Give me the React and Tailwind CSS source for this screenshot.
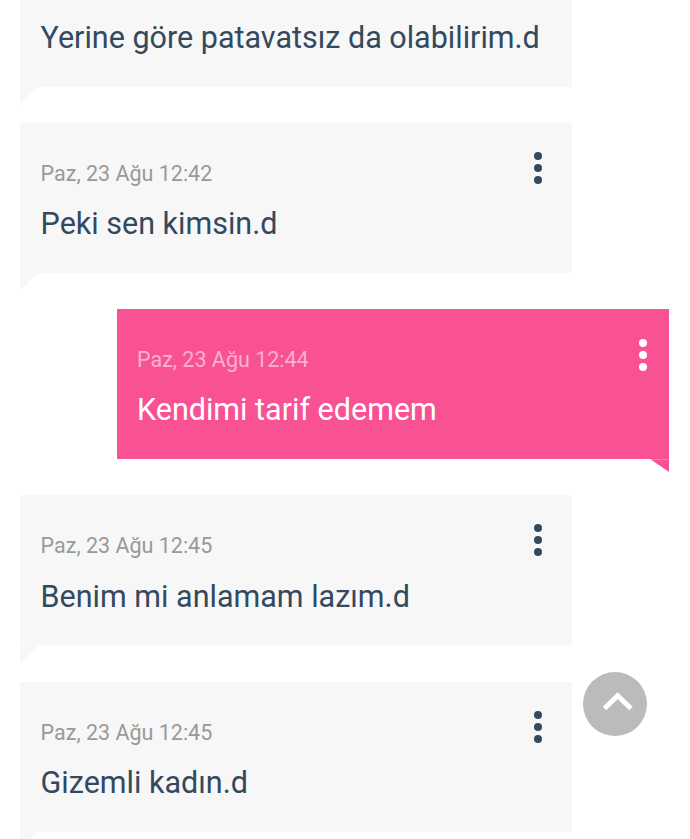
const messages = [
  { id: 1, text: 'Yerine göre patavatsız da olabilirim.d' },
  { id: 2, date: 'Paz, 23 Ağu 12:42', text: 'Peki sen kimsin.d' },
  { id: 3, date: 'Paz, 23 Ağu 12:44', text: 'Kendimi tarif edemem', mine: true },
  { id: 4, date: 'Paz, 23 Ağu 12:45', text: 'Benim mi anlamam lazım.d' },
  { id: 5, date: 'Paz, 23 Ağu 12:45', text: 'Gizemli kadın.d' },
];

function MoreDots({ mine }) {
  const dot = mine ? 'bg-white' : 'bg-[#34495e]';
  return (
    <div className={mine ? 'flex flex-col gap-[4px] pt-[30px] pr-[22px]' : 'flex flex-col gap-[4px] pt-[29px] pr-[30px]'}>
      <span className={`block w-[8px] h-[8px] rounded-full ${dot}`} />
      <span className={`block w-[8px] h-[8px] rounded-full ${dot}`} />
      <span className={`block w-[8px] h-[8px] rounded-full ${dot}`} />
    </div>
  );
}

function Message({ date, text, mine }) {
  return (
    <div
      className={
        mine
          ? 'relative ml-[117.4px] w-[552px] h-[150px] flex justify-between pl-[19.6px] bg-[#f85294]'
          : 'relative ml-[20px] w-[552.4px] h-[150px] flex justify-between pl-[20.6px] bg-[#f7f7f7]'
      }
    >
      {/* the first bubble is scrolled off the top, only its text shows */}
      <div className={date ? 'flex-1 min-w-0 whitespace-nowrap pt-[37px]' : 'flex-1 min-w-0 whitespace-nowrap pt-[81.2px]'}>
        {date && (
          <p className={mine ? 'mb-[16.2px] text-[21.5px] leading-[28px] text-[#fcb0cf]' : 'mb-[16.2px] text-[21.5px] leading-[28px] text-[#999999]'}>
            {date}
          </p>
        )}
        <p className={mine ? 'text-[30.5px] leading-[40px] text-white' : 'text-[30.5px] leading-[40px] text-[#34495e]'}>
          {text}
        </p>
      </div>
      {date && <MoreDots mine={mine} />}
      {mine ? (
        <div className="absolute top-full right-0 w-[19px] h-[13px] bg-[#f85294] [clip-path:polygon(0_0,100%_0,100%_100%)]" />
      ) : (
        <div className="absolute top-full left-0 w-[18px] h-[18px] bg-[#f7f7f7] [clip-path:polygon(0_0,100%_0,0_100%)]" />
      )}
    </div>
  );
}

export default function App() {
  return (
    <div className="relative w-[690px] h-[839px] overflow-hidden bg-white font-['Roboto',sans-serif]">
      <div className="flex flex-col gap-[36.25px] mt-[-63.35px]">
        {messages.map((m) => (
          <Message key={m.id} {...m} />
        ))}
      </div>
      <button className="absolute left-[583px] top-[672px] w-[64px] h-[64px] rounded-full bg-[#bbbbbb] flex items-center justify-center">
        <svg width="64" height="64" viewBox="0 0 64 64" fill="none">
          <path d="M21.5 36.5 L34.7 23.7 L48 36.5" stroke="#ffffff" strokeWidth="5" />
        </svg>
      </button>
    </div>
  );
}
